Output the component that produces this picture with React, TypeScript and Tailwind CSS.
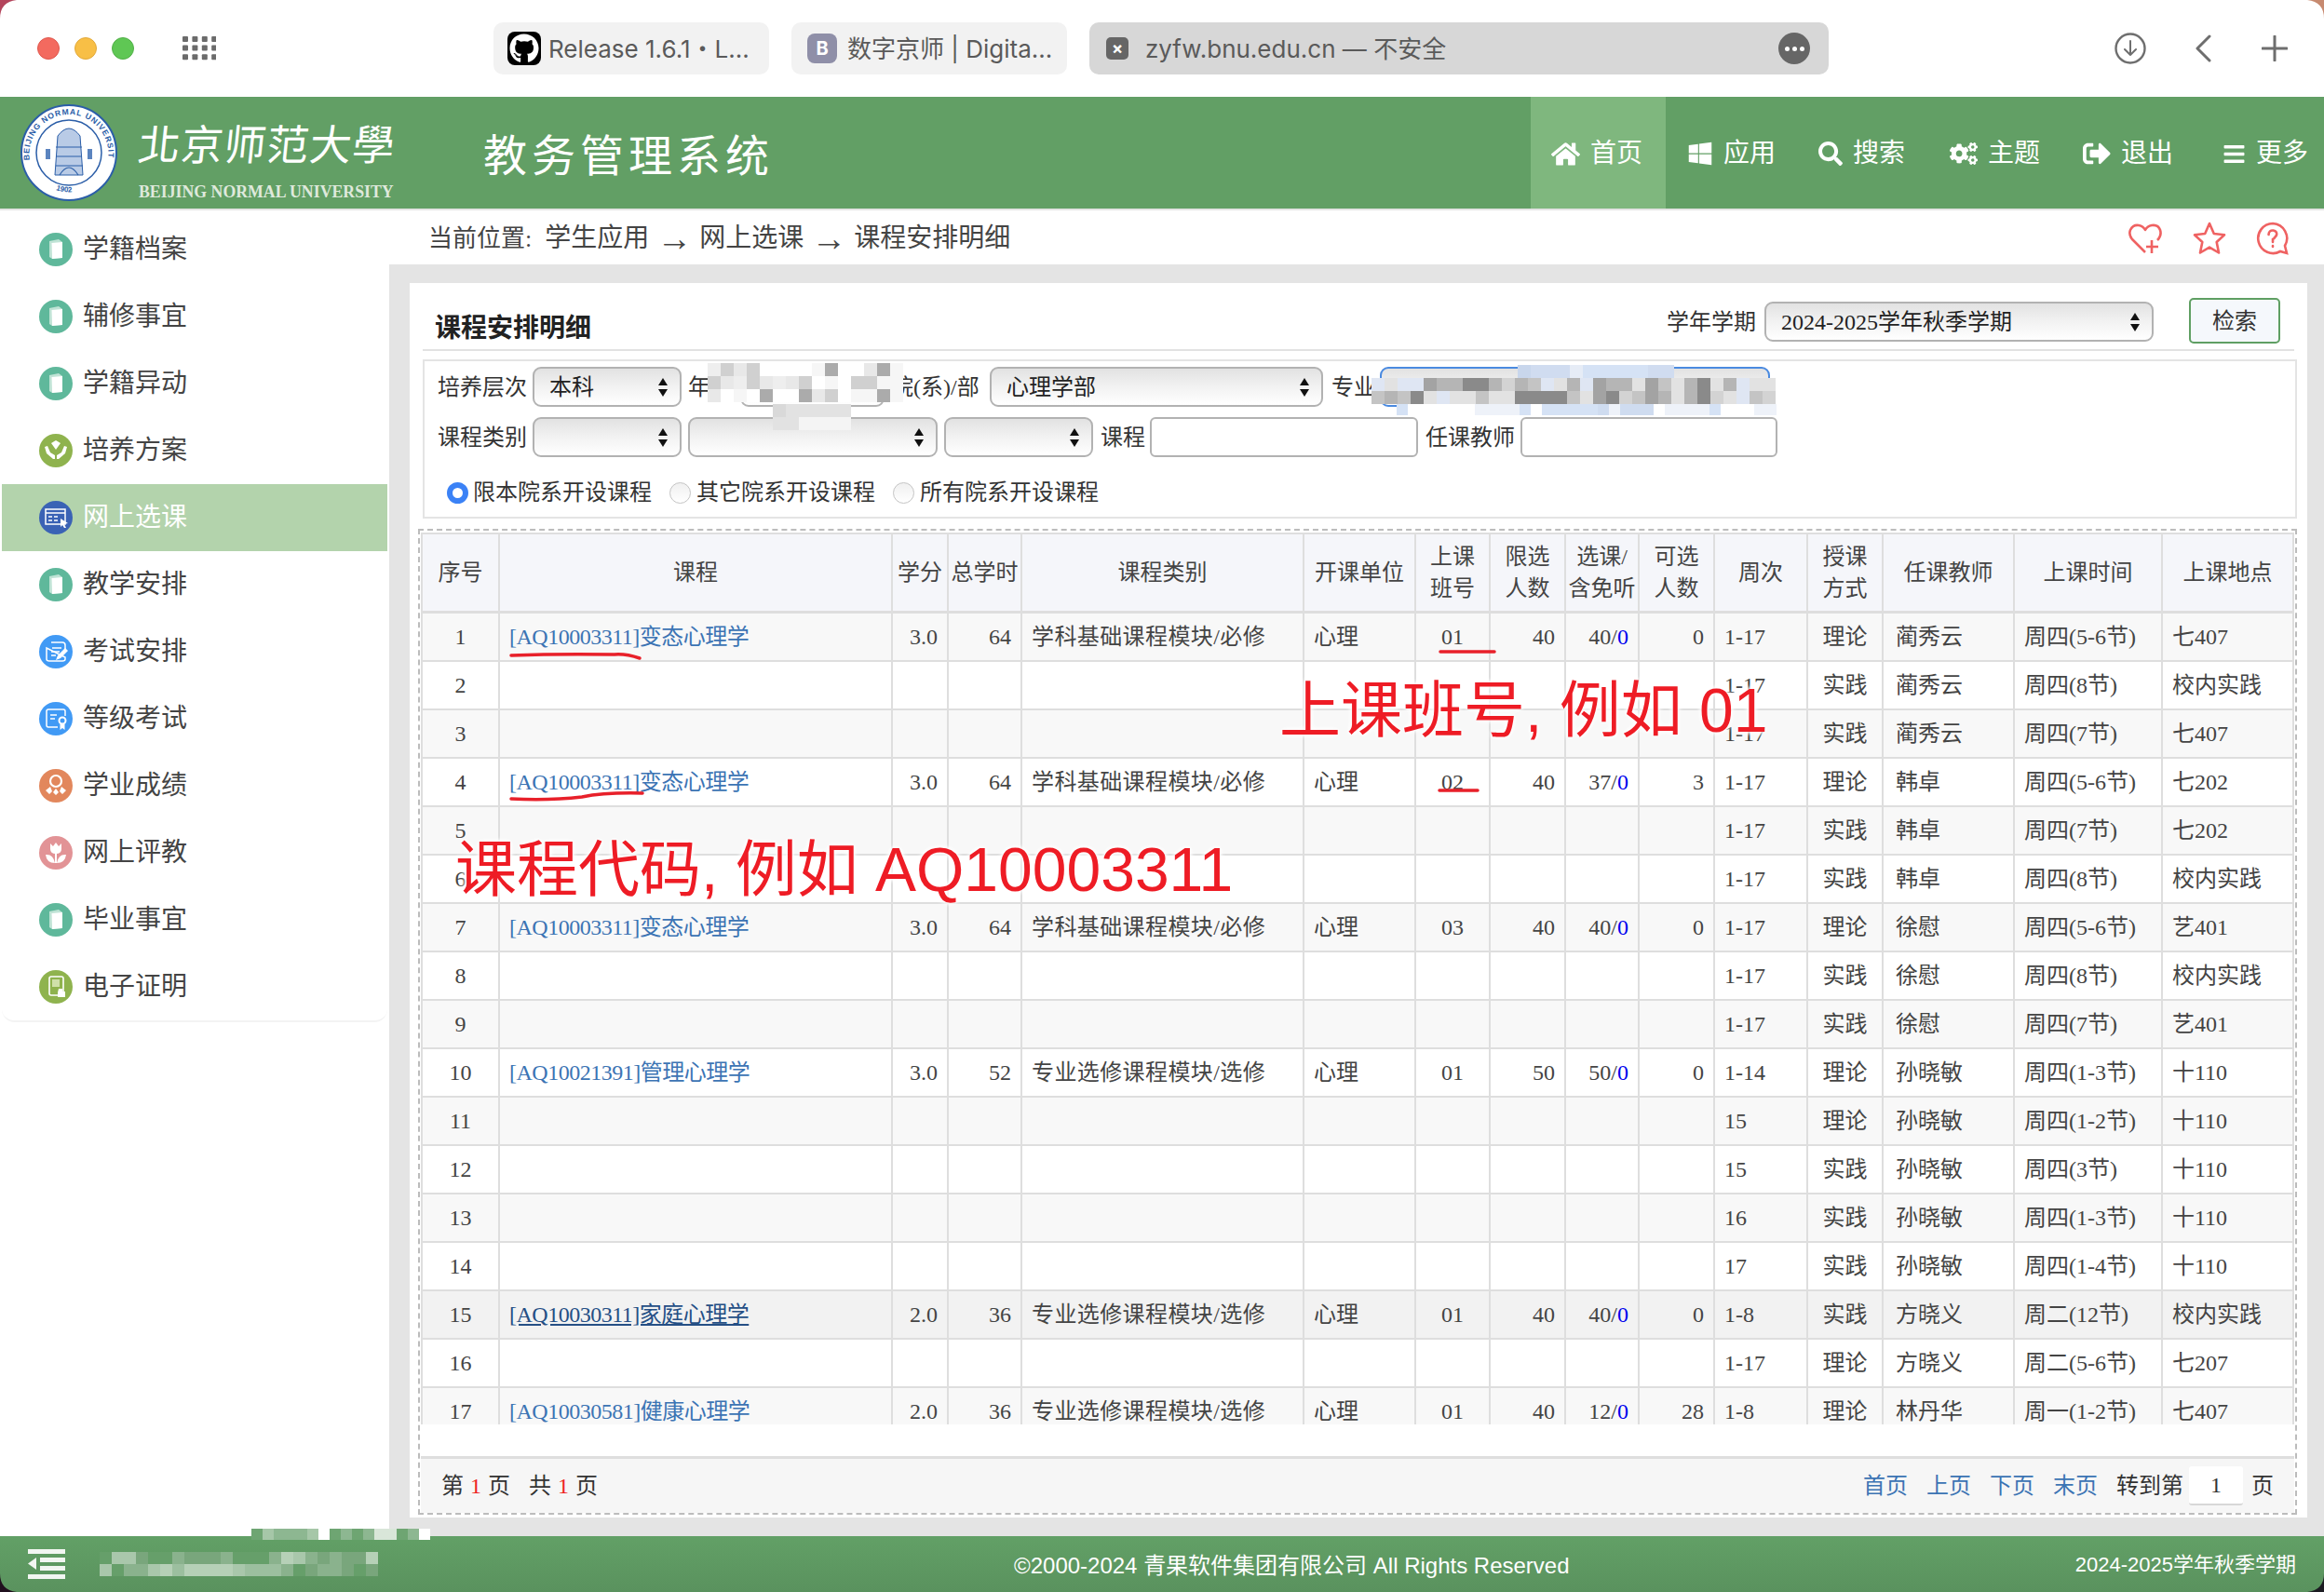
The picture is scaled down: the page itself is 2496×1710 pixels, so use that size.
import React from "react";
import { FaHome, FaWindows, FaSearch, FaCogs, FaSignOutAlt, FaBars, FaGithub } from "react-icons/fa";

const C1 = "[AQ10003311]变态心理学";
const rows: { c?: string[]; r: string[]; hover?: boolean }[] = [
  { c: [C1, "3.0", "64", "学科基础课程模块/必修", "心理", "01", "40", "40", "0"], r: ["1-17", "理论", "蔺秀云", "周四(5-6节)", "七407"] },
  { r: ["1-17", "实践", "蔺秀云", "周四(8节)", "校内实践"] },
  { r: ["1-17", "实践", "蔺秀云", "周四(7节)", "七407"] },
  { c: [C1, "3.0", "64", "学科基础课程模块/必修", "心理", "02", "40", "37", "3"], r: ["1-17", "理论", "韩卓", "周四(5-6节)", "七202"] },
  { r: ["1-17", "实践", "韩卓", "周四(7节)", "七202"] },
  { r: ["1-17", "实践", "韩卓", "周四(8节)", "校内实践"] },
  { c: [C1, "3.0", "64", "学科基础课程模块/必修", "心理", "03", "40", "40", "0"], r: ["1-17", "理论", "徐慰", "周四(5-6节)", "艺401"] },
  { r: ["1-17", "实践", "徐慰", "周四(8节)", "校内实践"] },
  { r: ["1-17", "实践", "徐慰", "周四(7节)", "艺401"] },
  { c: ["[AQ10021391]管理心理学", "3.0", "52", "专业选修课程模块/选修", "心理", "01", "50", "50", "0"], r: ["1-14", "理论", "孙晓敏", "周四(1-3节)", "十110"] },
  { r: ["15", "理论", "孙晓敏", "周四(1-2节)", "十110"] },
  { r: ["15", "实践", "孙晓敏", "周四(3节)", "十110"] },
  { r: ["16", "实践", "孙晓敏", "周四(1-3节)", "十110"] },
  { r: ["17", "实践", "孙晓敏", "周四(1-4节)", "十110"] },
  { hover: true, c: ["[AQ10030311]家庭心理学", "2.0", "36", "专业选修课程模块/选修", "心理", "01", "40", "40", "0"], r: ["1-8", "实践", "方晓义", "周二(12节)", "校内实践"] },
  { r: ["1-17", "理论", "方晓义", "周二(5-6节)", "七207"] },
  { c: ["[AQ10030581]健康心理学", "2.0", "36", "专业选修课程模块/选修", "心理", "01", "40", "12", "28"], r: ["1-8", "理论", "林丹华", "周一(1-2节)", "七407"] },
];
const widths = [85, 422, 60, 79, 303, 120, 80, 81, 79, 81, 100, 81, 141, 159, 141];
const heads: React.ReactNode[] = [
  "序号", "课程", "学分", "总学时", "课程类别", "开课单位",
  <>上课<br />班号</>, <>限选<br />人数</>, <>选课/<br />含免听</>, <>可选<br />人数</>,
  "周次", <>授课<br />方式</>, "任课教师", "上课时间", "上课地点",
];

function Circle({ fill, children }: { fill: string; children: React.ReactNode }) {
  return (
    <svg width="36" height="36" viewBox="0 0 36 36" className="shrink-0">
      <circle cx="18" cy="18" r="18" fill={fill} />
      {children}
    </svg>
  );
}
const Book = () => (
  <Circle fill="#5fb89b">
    <path d="M11 9 L21 7 L25 10 L25 27 L14 28 L11 26 Z" fill="#bfe3d5" />
    <path d="M13.5 11 L25 10 L25 27 L14 28 Z" fill="#fff" />
  </Circle>
);
const Hands = () => (
  <Circle fill="#8fb34e">
    <path d="M18 7 L23 10 L18 17 L13 10 Z" fill="#fff" />
    <path d="M6 14 L8 21 L15 27 L17 27 L17 23 L12 20 L9 13 Z M30 14 L28 21 L21 27 L19 27 L19 23 L24 20 L27 13 Z" fill="#fff" />
  </Circle>
);
const Sel = () => (
  <Circle fill="#3a62b5">
    <rect x="7" y="9" width="21" height="16" fill="none" stroke="#fff" strokeWidth="1.5" />
    <path d="M7 13 H28 M10 17 H14 M16 17 H20 M10 21 H14 M16 21 H20" stroke="#fff" strokeWidth="1.4" />
    <path d="M23 19 L31 24 L27 25 L29 29 L27 29 L25 26 L23 28 Z" fill="#fff" />
  </Circle>
);
const Exam = () => (
  <Circle fill="#419af5">
    <path d="M13 8 H25 Q28 8 28 11 V15 M28 24 V26 Q28 28 25 28 H11 Q8 28 8 26 V14 Z" fill="none" stroke="#fff" strokeWidth="1.5" />
    <path d="M14 14 H24 M13 18 H22 M13 22 H18" stroke="#fff" strokeWidth="1.5" />
    <path d="M18 27 L20 22 L28 14 L31 17 L23 25 Z" fill="#fff" />
  </Circle>
);
const Cert = () => (
  <Circle fill="#419af5">
    <path d="M20 27 H10 Q8 27 8 25 V10 Q8 8 10 8 H26 Q28 8 28 10 V15" fill="none" stroke="#fff" strokeWidth="1.5" />
    <path d="M12 14 H19 M12 18 H17" stroke="#fff" strokeWidth="1.5" />
    <circle cx="25" cy="20" r="3.5" fill="none" stroke="#fff" strokeWidth="2" />
    <path d="M22.5 24 V30 L25 28 L27.5 30 V24" fill="#fff" />
  </Circle>
);
const Medal = () => (
  <Circle fill="#e2875c">
    <circle cx="18" cy="13" r="6" fill="none" stroke="#fff" strokeWidth="2.2" />
    <path d="M12 19 L7 23 L11 27 L14 24 Z M24 19 L29 23 L25 27 L22 24 Z M18 21 L15 25 L18 28 L21 25 Z" fill="#fff" />
  </Circle>
);
const Flower = () => (
  <Circle fill="#e29396">
    <path d="M12 8 L15 11 L18 7 L21 11 L24 8 L24 14 Q24 19 18 19 Q12 19 12 14 Z" fill="#fff" />
    <path d="M17 18 H19 V29 H17 Z" fill="#fff" />
    <path d="M7 20 Q15 19 17 29 Q8 29 7 20 Z M29 20 Q21 19 19 29 Q28 29 29 20 Z" fill="#fff" />
  </Circle>
);
const Proof = () => (
  <Circle fill="#8fb34e">
    <rect x="11" y="7" width="15" height="20" rx="2" fill="none" stroke="#fff" strokeWidth="1.6" />
    <rect x="14" y="10" width="8" height="8" fill="#cfe0a9" />
    <path d="M21 20 H25 V23 H28 V29 H20 V24 Z" fill="#fff" />
  </Circle>
);

const menu: [string, React.FC, boolean?][] = [
  ["学籍档案", Book], ["辅修事宜", Book], ["学籍异动", Book], ["培养方案", Hands],
  ["网上选课", Sel, true], ["教学安排", Book], ["考试安排", Exam], ["等级考试", Cert],
  ["学业成绩", Medal], ["网上评教", Flower], ["毕业事宜", Book], ["电子证明", Proof],
];

function Arrows() {
  return (
    <svg width="12" height="22" viewBox="0 0 12 22" className="shrink-0">
      <path d="M6 1 L11 9 H1 Z M6 21 L11 13 H1 Z" fill="#111" />
    </svg>
  );
}
function Select({ w, children, focus }: { w: string; children?: React.ReactNode; focus?: boolean }) {
  return (
    <div className={`${w} h-[43px] shrink-0 flex items-center justify-between pl-[16px] pr-[12px] rounded-[9px] border-2 ${focus ? "border-[#4a8ae0]" : "border-[#b2b2b2]"} bg-gradient-to-b from-[#e2e2e2] via-[#f2f2f2] to-white text-[24px] text-[#222] leading-none`}>
      <span>{children}</span>
      <Arrows />
    </div>
  );
}
function Input({ w }: { w: string }) {
  return <div className={`${w} h-[43px] shrink-0 rounded-[6px] border-2 border-[#b2b2b2] bg-white`} />;
}
function Radio({ on }: { on?: boolean }) {
  return on ? (
    <span className="w-[23px] h-[23px] rounded-full border-[6px] border-[#3b82f6] bg-white shrink-0" />
  ) : (
    <span className="w-[23px] h-[23px] rounded-full border border-[#c4c4c4] bg-gradient-to-b from-[#f0f0f0] to-white shrink-0" />
  );
}

function Mosaic({ cls, cols, rows: n, cell, seed, colors, opacity = 1 }: { cls: string; cols: number; rows: number; cell: number; seed: number; colors: string[]; opacity?: number }) {
  const out: React.ReactNode[] = [];
  let s = seed;
  for (let y = 0; y < n; y++)
    for (let x = 0; x < cols; x++) {
      s = (s * 1103515245 + 12345) & 0x7fffffff;
      out.push(<rect key={`${x}-${y}`} x={x * cell} y={y * cell} width={cell} height={cell} fill={colors[(s >> 8) % colors.length]} />);
    }
  return (
    <svg width={cols * cell} height={n * cell} className={`absolute ${cls}`} opacity={opacity}>
      {out}
    </svg>
  );
}

function Seal() {
  return (
    <svg width="104" height="104" viewBox="0 0 104 104" className="shrink-0">
      <circle cx="52" cy="52" r="51" fill="#fff" stroke="#2b5ea8" strokeWidth="2" />
      <circle cx="52" cy="52" r="35" fill="#fff" stroke="#2b5ea8" strokeWidth="1.5" />
      <defs>
        <path id="sealtop" d="M10 60 A42.5 42.5 0 1 1 94 60" />
        <path id="sealbot" d="M38 92 A42 42 0 0 0 66 92" />
      </defs>
      <text fontSize="8.6" fontWeight="700" fill="#2b5ea8" fontFamily="Liberation Sans" letterSpacing="0.9">
        <textPath href="#sealtop">BEIJING NORMAL UNIVERSITY</textPath>
      </text>
      <text fontSize="8" fontWeight="700" fill="#2b5ea8" fontFamily="Liberation Sans">
        <textPath href="#sealbot">1902</textPath>
      </text>
      <path d="M40 34 Q52 18 64 34 L67 76 H37 Z" fill="#b9cbe6" stroke="#2b5ea8" strokeWidth="1" />
      <path d="M38 46 H66 M38 56 H66 M38 66 H67 M42 76 Q52 60 62 76" fill="none" stroke="#2b5ea8" strokeWidth="1.2" />
      <rect x="27" y="48" width="5" height="11" fill="#5b84bf" />
      <rect x="72" y="48" width="5" height="11" fill="#5b84bf" />
    </svg>
  );
}

const nav: [React.ReactNode, string, string][] = [
  [<FaHome size={31} />, "首页", "w-[145px] pl-[22px] bg-[#7fb77e]"],
  [<FaWindows size={28} />, "应用", "w-[144px] pl-[23px]"],
  [<FaSearch size={26} />, "搜索", "w-[140px] pl-[20px]"],
  [<FaCogs size={30} />, "主题", "w-[143px] pl-[21px]"],
  [<FaSignOutAlt size={30} />, "退出", "w-[146px] pl-[21px]"],
  [<FaBars size={25} />, "更多", "w-[134px] pl-[25px]"],
];

export default function App() {
  return (
    <div className="relative w-[2496px] h-[1710px] overflow-hidden flex flex-col bg-white font-['Liberation_Serif','Noto_Sans_CJK_SC',serif] text-[#444]">
      {/* browser bar */}
      <div className="h-[104px] shrink-0 bg-white flex items-center pl-[40px]">
        <span className="w-[24px] h-[24px] rounded-full bg-[#f36a5f] border border-[#e0574d]" />
        <span className="w-[24px] h-[24px] rounded-full bg-[#f8bf46] border border-[#e2a93a] ml-[16px]" />
        <span className="w-[24px] h-[24px] rounded-full bg-[#5fc754] border border-[#52b048] ml-[16px]" />
        <svg width="36" height="26" viewBox="0 0 36 26" className="ml-[52px]" fill="#6b6b6b">
          {[0, 1, 2].map((r) => [0, 1, 2, 3].map((c) => <rect key={`${r}${c}`} x={c * 10.4} y={r * 9.6} width="6" height="6" rx="1" />))}
        </svg>
        <div className="ml-[298px] flex gap-[24px] font-['Inter','Noto_Sans_CJK_SC',sans-serif] text-[26px] text-[#5a5a5a]">
          <div className="w-[296px] h-[56px] rounded-[10px] bg-[#f2f2f2] flex items-center pl-[15px] gap-[8px]">
            <span className="w-[36px] h-[36px] rounded-[8px] bg-black flex items-center justify-center"><FaGithub size={32} color="#fff" /></span>
            <span className="whitespace-nowrap">Release 1.6.1・L...</span>
          </div>
          <div className="w-[296px] h-[56px] rounded-[10px] bg-[#f2f2f2] flex items-center pl-[17px] gap-[11px]">
            <span className="w-[32px] h-[32px] rounded-[8px] bg-[#8f8fa8] text-white text-[20px] font-bold flex items-center justify-center">B</span>
            <span className="whitespace-nowrap">数字京师 | Digita...</span>
          </div>
          <div className="w-[794px] h-[56px] rounded-[10px] bg-[#d7d7d7] flex items-center pl-[18px] pr-[20px]">
            <span className="w-[24px] h-[24px] rounded-[5px] bg-[#666] text-white text-[18px] font-bold leading-none flex items-center justify-center">×</span>
            <span className="ml-[18px] whitespace-nowrap">zyfw.bnu.edu.cn — 不安全</span>
            <span className="ml-auto w-[34px] h-[34px] rounded-full bg-[#666] flex items-center justify-center gap-[3px]">
              <i className="w-[5px] h-[5px] rounded-full bg-white" /><i className="w-[5px] h-[5px] rounded-full bg-white" /><i className="w-[5px] h-[5px] rounded-full bg-white" />
            </span>
          </div>
        </div>
        <div className="ml-auto flex items-center pr-[39px] gap-[44px]">
          <svg width="34" height="34" viewBox="0 0 34 34" fill="none" stroke="#6e6e6e" strokeWidth="2.4" strokeLinecap="round" strokeLinejoin="round">
            <circle cx="17" cy="17" r="15.5" /><path d="M17 9 V24 M11 18 L17 24 L23 18" strokeWidth="2" />
          </svg>
          <svg width="18" height="30" viewBox="0 0 18 30" fill="none" stroke="#6e6e6e" strokeWidth="3" strokeLinecap="round" strokeLinejoin="round" className="ml-[8px]">
            <path d="M16 2 L3 15 L16 28" />
          </svg>
          <svg width="28" height="28" viewBox="0 0 28 28" fill="none" stroke="#6e6e6e" strokeWidth="3" strokeLinecap="round" className="ml-[10px]">
            <path d="M14 1 V27 M1 14 H27" />
          </svg>
        </div>
      </div>

      {/* app header */}
      <div className="h-[120px] shrink-0 bg-[#629f65] flex items-stretch text-white">
        <div className="flex items-center pl-[22px] w-[519px] shrink-0">
          <Seal />
          <div className="ml-[23px] flex flex-col self-start pt-[20px]">
            <span className="text-[45px] leading-[58px] font-['Noto_Sans_CJK_TC',sans-serif] -skew-x-6 whitespace-nowrap tracking-[1px]">北京师范大學</span>
            <span className="mt-[13px] font-bold text-[17.8px] leading-[22px] text-[#dfe9dc] whitespace-nowrap">BEIJING NORMAL UNIVERSITY</span>
          </div>
        </div>
        <div className="flex items-center pt-[8px] text-[47px] tracking-[5px] whitespace-nowrap">教务管理系统</div>
        <div className="ml-auto flex items-stretch">
          {nav.map(([ic, t, c]) => (
            <div key={t} className={`${c} flex items-center gap-[11px] text-[28px] pt-[2px]`}>
              {ic}
              <span className="whitespace-nowrap">{t}</span>
            </div>
          ))}
        </div>
      </div>

      {/* body */}
      <div className="flex-1 flex min-h-0 border-t-2 border-[#e4e4e4]">
        <div className="w-[418px] shrink-0 bg-white pl-[2px] pt-[6px]">
          <div className="w-[414px] rounded-b-[14px] border-b-2 border-[#f3f3f3]">
            {menu.map(([t, Ic, active]) => (
              <div key={t} className={`h-[72px] flex items-center pl-[40px] gap-[11px] text-[28px] ${active ? "bg-[#b3d3ac] text-white" : "text-[#444]"}`}>
                <Ic />
                <span className="whitespace-nowrap">{t}</span>
              </div>
            ))}
          </div>
        </div>
        <div className="flex-1 min-w-0 bg-[#e4e4e4] flex flex-col">
          <div className="h-[58px] bg-white shrink-0 flex items-center pl-[42px] pr-[37px] pt-[2px] text-[28px] whitespace-nowrap">
            <span className="text-[26px]">当前位置:</span>
            <span className="ml-[14px]">学生应用</span>
            <span className="mx-[8px] text-[38px] leading-none font-['Liberation_Sans']">→</span>
            <span>网上选课</span>
            <span className="mx-[8px] text-[38px] leading-none font-['Liberation_Sans']">→</span>
            <span>课程安排明细</span>
            <div className="ml-auto flex items-center gap-[32px]">
              <svg width="38" height="38" viewBox="0 0 38 38" fill="none" stroke="#ef6262" strokeWidth="2.6" strokeLinejoin="round">
                <path d="M19 34 L5 20 Q1 15 3 10 Q6 4 12 5 Q17 6 19 10 Q21 6 26 5 Q33 4 35 10 Q37 16 32 21" />
                <path d="M26 21 V35 M20 28 H33" />
              </svg>
              <svg width="36" height="36" viewBox="0 0 36 36" fill="none" stroke="#ef6262" strokeWidth="2.6" strokeLinejoin="round">
                <path d="M18 2 L22.8 13 L34 14.3 L25.7 22 L28 33.5 L18 27.6 L8 33.5 L10.3 22 L2 14.3 L13.2 13 Z" />
              </svg>
              <svg width="36" height="36" viewBox="0 0 36 36" fill="none" stroke="#ef6262" strokeWidth="2.6" strokeLinecap="round">
                <path d="M18 2 A16 16 0 1 0 26 32 L33 34 L31 26 A16 16 0 0 0 18 2 Z" />
                <path d="M13.5 14 Q14 9 18.5 9.5 Q23 10.5 22 14.5 Q20 18 18 19 V22 M18 26 V27" />
              </svg>
            </div>
          </div>

          <div className="ml-[22px] mr-[18px] mt-[20px] h-[1326px] bg-white pl-[9px] pr-[11px]">
            <div className="ml-[5px] mr-[3px] h-[73px] border-b-2 border-[#e2e2e2] flex items-center pl-[13px] pr-[15px]">
              <span className="text-[28px] font-bold text-[#222] mt-[26px] whitespace-nowrap">课程安排明细</span>
              <span className="ml-auto text-[24px] text-[#333] mr-[9px] mt-[12px]">学年学期</span>
              <div className="mt-[12px]"><Select w="w-[418px]">2024-2025学年秋季学期</Select></div>
              <div className="ml-[38px] mt-[10px] w-[98px] h-[49px] rounded-[5px] border-2 border-[#5f9f63] bg-[#f5f8fc] text-[24px] text-[#333] flex items-center justify-center">检索</div>
            </div>

            <div className="ml-[5px] mt-[9px] h-[171px] border-2 border-[#e4e4e4] pl-[14px] pt-[6px] text-[24px] text-[#333] whitespace-nowrap">
              <div className="flex items-center h-[43px]">
                <span className="w-[102px]">培养层次</span>
                <Select w="w-[160px]">本科</Select>
                <span className="ml-[7px] w-[56px]">年级</span>
                <Select w="w-[155px]" />
                <span className="ml-[7px] w-[106px]">院(系)/部</span>
                <Select w="w-[358px]">心理学部</Select>
                <span className="ml-[9px] w-[52px]">专业</span>
                <Select w="w-[419px]" focus />
              </div>
              <div className="flex items-center h-[43px] mt-[11px]">
                <span className="w-[102px]">课程类别</span>
                <Select w="w-[160px]" />
                <div className="ml-[7px]"><Select w="w-[268px]" /></div>
                <div className="ml-[7px]"><Select w="w-[160px]" /></div>
                <span className="ml-[8px] w-[53px]">课程</span>
                <Input w="w-[288px]" />
                <span className="ml-[8px] w-[102px]">任课教师</span>
                <Input w="w-[276px]" />
              </div>
              <div className="flex items-center h-[24px] mt-[26px] pl-[10px]">
                <Radio on /><span className="ml-[5px]">限本院系开设课程</span>
                <span className="ml-[19px] flex items-center"><Radio /><span className="ml-[6px]">其它院系开设课程</span></span>
                <span className="ml-[19px] flex items-center"><Radio /><span className="ml-[6px]">所有院系开设课程</span></span>
              </div>
            </div>

            <div className="mt-[11px] h-[1059px] border-2 border-dashed border-[#bcbcbc] pt-[2px] pl-[1px] pr-[1px] flex flex-col">
              <div className="h-[958px] overflow-hidden shrink-0">
                <table className="table-fixed border-separate border-spacing-0 w-[2012px] text-[24px] text-[#444]">
                  <colgroup>
                    {widths.map((w, i) => <col key={i} style={{ width: w }} />)}
                  </colgroup>
                  <thead>
                    <tr className="h-[87px] bg-[#f5f6fa]">
                      {heads.map((h, i) => (
                        <th key={i} className="font-normal leading-[34px] border-t-2 border-b-[3px] border-r-2 border-[#dedede] first:border-l-2 whitespace-nowrap p-0 text-[#444]">{h}</th>
                      ))}
                    </tr>
                  </thead>
                  <tbody>
                    {rows.map((row, i) => {
                      const bg = row.hover ? "bg-[#f2f2f2]" : i % 2 === 0 ? "bg-[#f8f8f8]" : "bg-white";
                      const td = "h-[52px] p-0 border-b-2 border-r-2 border-[#dedede] whitespace-nowrap";
                      const c = row.c;
                      return (
                        <tr key={i} className={bg}>
                          <td className={`${td} border-l-2 text-center`}>{i + 1}</td>
                          <td className={`${td} pl-[10px] text-[#3c74b4] tracking-[-0.5px]`}>
                            {c && <span className={row.hover ? "underline text-[#254f85]" : ""}>{c[0]}</span>}
                          </td>
                          <td className={`${td} text-right pr-[10px]`}>{c?.[1]}</td>
                          <td className={`${td} text-right pr-[10px]`}>{c?.[2]}</td>
                          <td className={`${td} pl-[10px] tracking-[0.4px]`}>{c?.[3]}</td>
                          <td className={`${td} pl-[10px]`}>{c?.[4]}</td>
                          <td className={`${td} text-center`}>{c?.[5]}</td>
                          <td className={`${td} text-right pr-[10px]`}>{c?.[6]}</td>
                          <td className={`${td} text-right pr-[10px]`}>{c && <>{c[7]}/<span className="text-[#0000ee]">0</span></>}</td>
                          <td className={`${td} text-right pr-[10px]`}>{c?.[8]}</td>
                          <td className={`${td} pl-[10px]`}>{row.r[0]}</td>
                          <td className={`${td} text-center`}>{row.r[1]}</td>
                          <td className={`${td} pl-[13px]`}>{row.r[2]}</td>
                          <td className={`${td} pl-[10px]`}>{row.r[3]}</td>
                          <td className={`${td} pl-[10px]`}>{row.r[4]}</td>
                        </tr>
                      );
                    })}
                  </tbody>
                </table>
              </div>
              <div className="mt-[34px] flex-1 border-t-[3px] border-[#dedede] bg-[#f6f6f6] flex items-center pl-[22px] pr-[22px] text-[24px] text-[#333] whitespace-nowrap">
                <span>第<span className="text-[#e22] mx-[7px]">1</span>页</span>
                <span className="ml-[20px]">共<span className="text-[#e22] mx-[7px]">1</span>页</span>
                <div className="ml-auto flex items-center">
                  <span className="text-[#3c74b4]">首页</span>
                  <span className="text-[#3c74b4] ml-[20px]">上页</span>
                  <span className="text-[#3c74b4] ml-[20px]">下页</span>
                  <span className="text-[#3c74b4] ml-[20px]">末页</span>
                  <span className="ml-[20px]">转到第</span>
                  <span className="ml-[6px] w-[58px] h-[42px] bg-white border-b-2 border-[#d8d8d8] rounded-[3px] flex items-center justify-center">1</span>
                  <span className="ml-[9px]">页</span>
                </div>
              </div>
            </div>
          </div>
        </div>
      </div>

      {/* footer */}
      <div className="h-[60px] shrink-0 bg-gradient-to-b from-[#62a066] to-[#5a925e] flex items-center pl-[30px] pr-[30px] text-white font-['Liberation_Sans','Noto_Sans_CJK_SC',sans-serif] text-[22px] whitespace-nowrap relative">
        <svg width="40" height="32" viewBox="0 0 40 32" fill="#f2f6f2">
          <rect x="0" y="0" width="40" height="5" /><rect x="13" y="9" width="27" height="5" /><rect x="13" y="18" width="27" height="5" /><rect x="0" y="27" width="40" height="5" />
          <path d="M0 15.5 L9 9 V22 Z" />
        </svg>
        <span className="absolute left-[1089px] top-[14px] text-[24px]">©2000-2024 青果软件集团有限公司 All Rights Reserved</span>
        <span className="ml-auto">2024-2025学年秋季学期</span>
      </div>

      {/* annotations and privacy mosaics over the page */}
      <Mosaic cls="left-[760px] top-[390px]" cols={15} rows={3} cell={14} seed={7} colors={["#f6f6f6", "#e8e8e8", "#fff", "#d0d0d0", "#ababab", "#eee"]} />
      <Mosaic cls="left-[830px] top-[434px]" cols={6} rows={2} cell={14} seed={21} colors={["#f4f4f4", "#e2e2e2", "#fff", "#d9d9d9"]} />
      <Mosaic cls="left-[1473px] top-[406px]" cols={31} rows={2} cell={14} seed={11} colors={["#dfe6f3", "#c4c4c4", "#a3a3a3", "#8a8a8a", "#e2e2e2", "#b5b5b5", "#d3d3d3"]} />
      <Mosaic cls="left-[1630px] top-[392px]" cols={12} rows={1} cell={14} seed={17} colors={["#d5e2f5", "#c8d6ec", "#e6ecf6", "#d0dcf0"]} />
      <Mosaic cls="left-[1500px] top-[434px]" cols={34} rows={1} cell={12} seed={5} colors={["#d5e2f5", "#eef2f9", "#fff", "#cfdcf0"]} />
      <Mosaic cls="left-[107px] top-[1667px]" cols={23} rows={2} cell={13} seed={3} colors={["#9cbf9f", "#8ab28d", "#a9c7ab", "#79a67c", "#b6d0b7", "#669f6a"]} />
      <Mosaic cls="left-[270px] top-[1642px]" cols={16} rows={1} cell={12} seed={9} colors={["#fff", "#8db791", "#a6c7a8", "#d9e6d9", "#6ea572"]} />

      <svg width="2496" height="1710" className="absolute left-0 top-0 pointer-events-none" fill="none" stroke="#e8202a" strokeWidth="3.5" strokeLinecap="round">
        <path d="M549 704 Q600 702 660 703 Q672 702 687 707" />
        <path d="M549 858 Q590 860 625 856 Q650 851 690 852" />
        <path d="M1547 700 H1605" />
        <path d="M1546 849 H1587" />
      </svg>
      <div className="absolute left-[1374px] top-[725px] text-[66px] leading-[76px] text-[#ee1c25] font-['Liberation_Sans','Noto_Sans_CJK_SC',sans-serif] whitespace-nowrap [text-shadow:0_0_6px_#fff,0_0_6px_#fff,0_0_4px_#fff]">上课班号, 例如 01</div>
      <div className="absolute left-[489px] top-[896px] text-[66px] leading-[76px] text-[#ee1c25] font-['Liberation_Sans','Noto_Sans_CJK_SC',sans-serif] whitespace-nowrap [text-shadow:0_0_6px_#fff,0_0_6px_#fff,0_0_4px_#fff]">课程代码, 例如 AQ10003311</div>

      {/* window corners */}
      <svg width="2496" height="1710" className="absolute left-0 top-0 pointer-events-none">
        <path d="M0 0 H18 Q0 2 0 20 Z" fill="#b4455c" />
        <path d="M2496 0 H2478 Q2496 2 2496 20 Z" fill="#c78a70" />
        <path d="M0 1710 H18 Q0 1708 0 1690 Z" fill="#20101e" />
        <path d="M2496 1710 H2478 Q2496 1708 2496 1690 Z" fill="#1c1c22" />
      </svg>
    </div>
  );
}
